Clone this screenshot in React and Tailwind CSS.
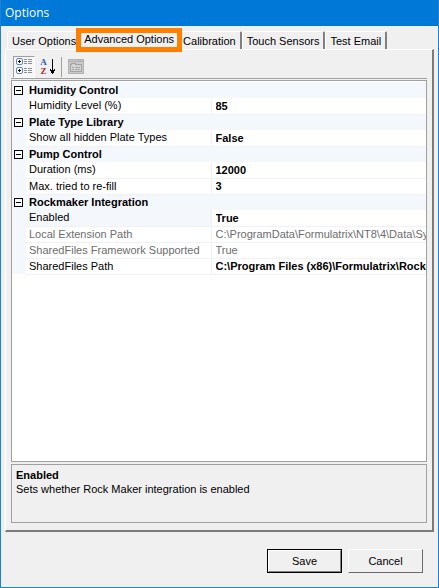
import { Fragment, useState } from "react";
import clsx from "clsx";

const tabs = ["User Options", "Advanced Options", "Calibration", "Touch Sensors", "Test Email"];

const categories = [
  {
    name: "Humidity Control",
    items: [{ label: "Humidity Level (%)", value: "85" }],
  },
  {
    name: "Plate Type Library",
    items: [{ label: "Show all hidden Plate Types", value: "False" }],
  },
  {
    name: "Pump Control",
    items: [
      { label: "Duration (ms)", value: "12000" },
      { label: "Max. tried to re-fill", value: "3" },
    ],
  },
  {
    name: "Rockmaker Integration",
    items: [
      { label: "Enabled", value: "True" },
      { label: "Local Extension Path", value: "C:\\ProgramData\\Formulatrix\\NT8\\4\\Data\\System", readOnly: true },
      { label: "SharedFiles Framework Supported", value: "True", readOnly: true },
      { label: "SharedFiles Path", value: "C:\\Program Files (x86)\\Formulatrix\\Rock Maker" },
    ],
  },
];

function CategorizedIcon() {
  return (
    <svg width="18" height="17" viewBox="0 0 18 17">
      {[0, 9].map((y) => (
        <g key={y} transform={`translate(0 ${y})`}>
          <rect x="1.5" y="0.5" width="6" height="6" rx="1.5" fill="#fff" stroke="#5b87c0" />
          <g shapeRendering="crispEdges">
            <rect x="3" y="3" width="3" height="1" fill="#000" />
            <rect x="4" y="2" width="1" height="3" fill="#000" />
            <path d="M9 1.5h3M9 3.5h3M9 5.5h3M13 1.5h4M13 3.5h4M13 5.5h4" stroke="#8c9096" />
          </g>
        </g>
      ))}
    </svg>
  );
}

function SortIcon() {
  return (
    <span className="flex gap-0.5">
      <span className="flex w-[8px] flex-col items-center font-['Liberation_Serif',serif] text-[9px] leading-[9px] font-bold">
        <span className="text-[#2f55b0]">A</span>
        <span className="text-[#a02c34]">Z</span>
      </span>
      <svg width="5" height="17" viewBox="0 0 5 17" shapeRendering="crispEdges">
        <path d="M2 1h1v15h-1zM0 11h5v2h-5zM1 13h3v2h-3z" fill="#000" />
        <path d="M1 11h1v1h-1zM3 11h1v1h-1z" fill="#f0f0f0" />
      </svg>
    </span>
  );
}

function PagesIcon() {
  return (
    <svg width="16" height="15" viewBox="0 0 16 15" shapeRendering="crispEdges">
      <rect width="16" height="15" fill="#b2b2b2" />
      <path d="M1 3h14v11h-14z" fill="#cacaca" />
      <path d="M2.5 12.5v-7h1v-1h4v1h6v7z" fill="#d4d4d4" stroke="#a2a2a2" />
      <path d="M4 8.5h2M7 8.5h5M4 10.5h2M7 10.5h5" stroke="#a6a6a6" />
      <path d="M1 1.5h9M11 1.5h1M13 1.5h1" stroke="#c4c4c4" />
    </svg>
  );
}

function PropertyGrid({ selected, onSelect }) {
  const [closed, setClosed] = useState([]);

  const toggle = (name) =>
    setClosed(closed.includes(name) ? closed.filter((n) => n !== name) : [...closed, name]);

  return (
    <table className="w-full table-fixed border-collapse">
      <colgroup>
        <col className="w-[14px]" />
        <col className="w-[185px]" />
        <col />
      </colgroup>
      <tbody>
        {categories.map((category) => (
          <Fragment key={category.name}>
            <tr className="h-4 bg-[#f4f7fc]">
              <td className="p-0">
                <button
                  aria-label={`Toggle ${category.name}`}
                  onClick={() => toggle(category.name)}
                  className="ml-0.5 flex size-[9px] items-center justify-center border border-black bg-white"
                >
                  <span className="h-px w-[5px] bg-black" />
                </button>
              </td>
              <th colSpan={2} className="p-0 pl-[3px] text-left font-bold">
                {category.name}
              </th>
            </tr>
            {!closed.includes(category.name) &&
              category.items.map((item) => (
                <tr key={item.label} onClick={() => onSelect(item.label)} className="h-4">
                  <td className="bg-[#f4f7fc] p-0" />
                  <td
                    className={clsx(
                      "border-b border-[#f0f2f5] p-0 pl-[3px]",
                      item.label === selected && "bg-[#f4f7fc]",
                      item.readOnly && "text-[#6d6d6d]"
                    )}
                  >
                    <label htmlFor={item.label} className="block truncate leading-[15px]">
                      {item.label}
                    </label>
                  </td>
                  <td className="border-b border-l border-[#f0f2f5] p-0 pl-1">
                    <input
                      id={item.label}
                      defaultValue={item.value}
                      readOnly={item.readOnly}
                      className={clsx(
                        "block h-[15px] w-full bg-transparent outline-none",
                        item.readOnly ? "text-[#6d6d6d]" : "font-bold"
                      )}
                    />
                  </td>
                </tr>
              ))}
          </Fragment>
        ))}
      </tbody>
    </table>
  );
}

export default function App() {
  const [activeTab, setActiveTab] = useState("Advanced Options");
  const [selected, setSelected] = useState("Enabled");

  return (
    <div className="flex min-h-screen flex-col border border-t-0 border-[#1883d7] bg-[#f0f0f0] font-['Liberation_Sans',Arial,sans-serif] text-[11px] leading-[14px] text-black">
      <header className="flex h-[26px] items-center bg-[#0078d7] px-1 font-['Open_Sans','Noto_Sans',sans-serif] text-xs text-white">
        <h1>Options</h1>
      </header>

      <main className="flex flex-1 flex-col px-1 pt-0.5">
        <div role="tablist" className="flex h-[21px] items-end pl-0.5">
          {tabs.map((tab) =>
            tab === activeTab ? (
              <button
                key={tab}
                role="tab"
                aria-selected="true"
                className="relative -mr-1 -mb-[3px] -ml-1.5 h-6 border-[5px] border-[#ff8000] bg-[#f0f0f0] px-[3px] pb-0.5 leading-3 whitespace-nowrap"
              >
                {tab}
              </button>
            ) : (
              <button
                key={tab}
                role="tab"
                aria-selected="false"
                onClick={() => setActiveTab(tab)}
                className="h-[18px] rounded-t-xs border-t border-r-2 border-l border-t-white border-r-[#808080] border-l-white px-1 whitespace-nowrap"
              >
                {tab}
              </button>
            )
          )}
        </div>

        <section className="flex flex-1 flex-col border-t border-r-2 border-b-2 border-l border-t-white border-r-[#7a7a7a] border-b-[#7a7a7a] border-l-white px-[5px] pt-[5px] pb-[7px]">
          <div className="flex h-6 items-center border-b border-[#a0a0a0]">
            <button
              aria-label="Categorized"
              className="ml-0.5 flex h-[22px] w-[22px] items-center justify-center border border-t-[#a0a0a0] border-r-white border-b-white border-l-[#a0a0a0] bg-[#f6f6f6]"
            >
              <CategorizedIcon />
            </button>
            <button aria-label="Alphabetical" className="flex h-[22px] w-6 items-center justify-center">
              <SortIcon />
            </button>
            <span className="mx-0.5 h-5 w-px bg-[#a0a0a0]" />
            <button aria-label="Property Pages" disabled className="flex h-[22px] w-6 items-center justify-center">
              <PagesIcon />
            </button>
          </div>

          <div className="mt-px flex-1 border border-[#a0a0a0] bg-white pt-px">
            <PropertyGrid selected={selected} onSelect={setSelected} />
          </div>

          <div className="mt-0.5 h-[59px] border border-[#a0a0a0] px-1 py-[3px]">
            <h2 className="font-bold">{selected}</h2>
            {selected === "Enabled" && <p>Sets whether Rock Maker integration is enabled</p>}
          </div>
        </section>

        <footer className="flex justify-end gap-1.5 pt-[17px] pr-[11px] pb-[14px]">
          <button className="h-6 w-[75px] border border-black">
            <span className="flex h-full items-center justify-center border border-t-white border-r-[#808080] border-b-[#808080] border-l-white">
              Save
            </span>
          </button>
          <button className="h-6 w-[75px] border border-t-white border-r-[#696969] border-b-[#696969] border-l-white">
            Cancel
          </button>
        </footer>
      </main>
    </div>
  );
}
